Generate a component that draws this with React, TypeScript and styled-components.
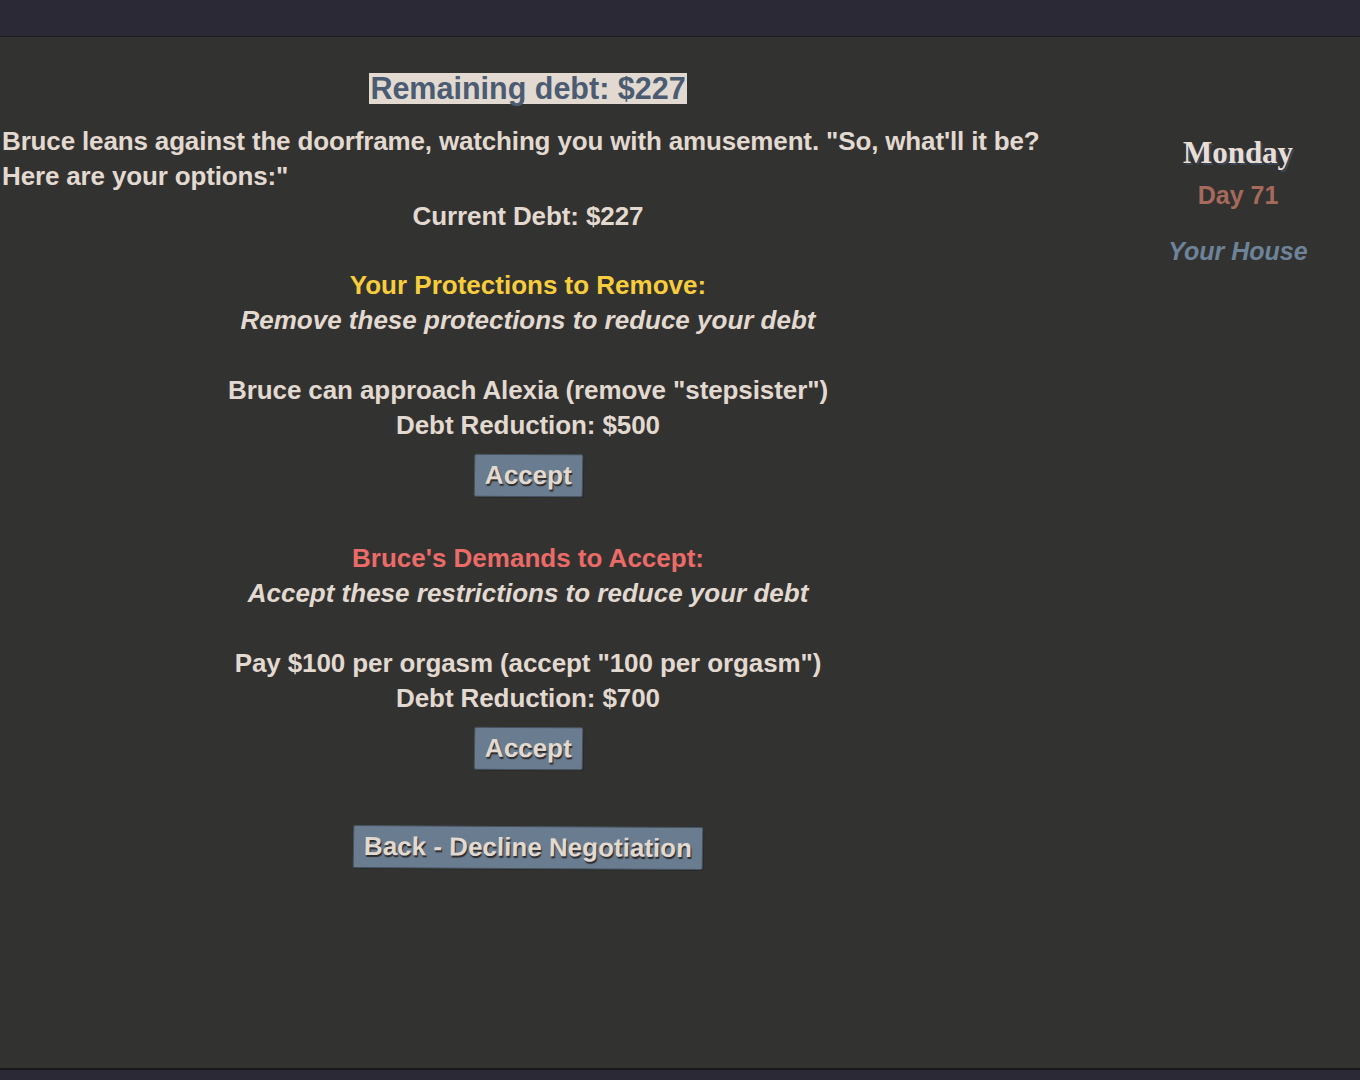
import React from "react";
import styled, { createGlobalStyle } from "styled-components";

const GlobalStyle = createGlobalStyle`
  html, body {
    margin: 0;
    padding: 0;
    background: #323230;
  }
  body {
    font-family: "Liberation Sans", Arial, sans-serif;
    color: #e2d9d0;
  }
`;

const options = [
  {
    title: "Your Protections to Remove:",
    subtitle: "Remove these protections to reduce your debt",
    tone: "#f7cd3d",
    item: 'Bruce can approach Alexia (remove "stepsister")',
    reduction: 500,
  },
  {
    title: "Bruce's Demands to Accept:",
    subtitle: "Accept these restrictions to reduce your debt",
    tone: "#eb6b68",
    item: 'Pay $100 per orgasm (accept "100 per orgasm")',
    reduction: 700,
  },
];

const App = () => {
  return (
    <>
      <GlobalStyle />
      <Page>
        <TopBar />
        <Main>
          <Story>
            <HeadingRow>
              <DebtBadge>Remaining debt: $227</DebtBadge>
            </HeadingRow>
            <Narration>
              Bruce leans against the doorframe, watching you with amusement. "So, what'll it be?
              <br />
              Here are your options:"
            </Narration>
            <CenterLine $top={5}>Current Debt: $227</CenterLine>

            {options.map((opt) => (
              <Section key={opt.title}>
                <SectionTitle $tone={opt.tone}>{opt.title}</SectionTitle>
                <SectionHint>{opt.subtitle}</SectionHint>
                <Offer>
                  <CenterLine>{opt.item}</CenterLine>
                  <CenterLine>Debt Reduction: ${opt.reduction}</CenterLine>
                </Offer>
                <ButtonRow>
                  <Button>Accept</Button>
                </ButtonRow>
              </Section>
            ))}

            <ButtonRow $top={56}>
              <Button>Back - Decline Negotiation</Button>
            </ButtonRow>
          </Story>
          <Sidebar>
            <DayName>Monday</DayName>
            <DayCount>Day 71</DayCount>
            <Location>Your House</Location>
          </Sidebar>
        </Main>
        <BottomBar />
      </Page>
    </>
  );
};

export default App;

const Page = styled.div`
  display: flex;
  flex-direction: column;
  height: 100vh;
  overflow: hidden;
`;

const TopBar = styled.div`
  height: 36px;
  flex-shrink: 0;
  background: #2a2935;
  border-bottom: 1px solid #1c1c20;
  box-shadow: 0 1px 0 #3b3632;
`;

const BottomBar = styled.div`
  height: 10px;
  flex-shrink: 0;
  background: #2a2935;
  border-top: 2px solid #18181a;
`;

const Main = styled.div`
  flex: 1;
  display: flex;
  justify-content: space-between;
  background: #323230;
`;

const Story = styled.div`
  width: 1054px;
  padding: 36px 0 0 2px;
  box-sizing: border-box;
  font-size: 26px;
  font-weight: 700;
  line-height: 35px;
`;

const HeadingRow = styled.div`
  text-align: center;
  line-height: 0;
`;

const DebtBadge = styled.span`
  display: inline-block;
  background: #e2d9d0;
  color: #4b5b71;
  font-size: 30.5px;
  font-weight: 700;
  line-height: 31px;
  padding: 0 1px;
`;

const Narration = styled.p`
  margin: 20px 0 0;
  letter-spacing: -0.15px;
`;

const CenterLine = styled.div<{ $top?: number }>`
  text-align: center;
  letter-spacing: -0.1px;
  margin-top: ${(p) => p.$top ?? 0}px;
`;

const Section = styled.div`
  margin-top: 34px;
  text-align: center;
  & + & {
    margin-top: 44px;
  }
`;

const SectionTitle = styled.div<{ $tone: string }>`
  color: ${(p) => p.$tone};
`;

const SectionHint = styled.div`
  font-style: italic;
`;

const Offer = styled.div`
  margin-top: 35px;
`;

const ButtonRow = styled.div<{ $top?: number }>`
  display: flex;
  justify-content: center;
  margin-top: ${(p) => p.$top ?? 11}px;
`;

const Button = styled.button`
  font-family: "Liberation Sans", Arial, sans-serif;
  font-size: 26px;
  font-weight: 700;
  color: #e2d9d0;
  background: #6a7c8f;
  border: 1px solid #46525e;
  border-radius: 2px;
  padding: 4px 10px;
  line-height: 33px;
  text-shadow: 1px 2px 1px #2c2c2c;
  box-shadow: 1px 1px 0 #2a2a2a;
  transform: rotate(0.35deg) skewX(-0.6deg);
  cursor: pointer;
`;

const Sidebar = styled.aside`
  width: 244px;
  padding-top: 96px;
  display: flex;
  flex-direction: column;
  align-items: center;
  font-weight: 700;
`;

const DayName = styled.div`
  font-family: "Liberation Serif", "DejaVu Serif", serif;
  font-size: 31px;
  line-height: 40px;
  color: #e8ded5;
  text-shadow: 2px 2px 0 #3a4658;
`;

const DayCount = styled.div`
  font-size: 25px;
  line-height: 40px;
  color: #a66a5c;
  margin-top: 2px;
`;

const Location = styled.div`
  font-size: 25px;
  font-style: italic;
  line-height: 40px;
  color: #6d8399;
  margin-top: 16px;
`;
